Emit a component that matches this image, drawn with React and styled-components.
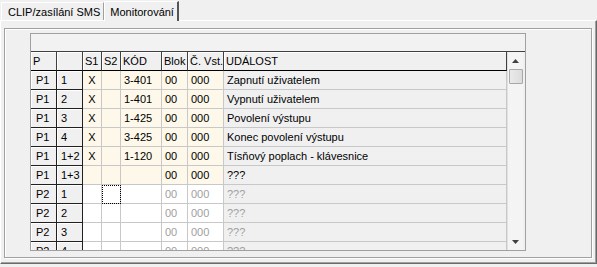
import styled, { createGlobalStyle } from "styled-components";

const GlobalStyle = createGlobalStyle`
  html, body {
    margin: 0;
    padding: 0;
    background: #f0f0f0;
  }
  * {
    box-sizing: border-box;
  }
`;

const columns = "26px 26px 19px 19px 41px 26px 36px 283px";

const Page = styled.div`
  width: 597px;
  height: 267px;
  background: #f0f0f0;
  font-family: "Liberation Sans", Arial, sans-serif;
  font-size: 11px;
  color: #000;
  overflow: hidden;
`;

const TabStrip = styled.div`
  display: flex;
  align-items: flex-end;
  height: 20px;
  padding-left: 1px;
`;

const Tab = styled.div`
  height: ${(p) => (p.$active ? "20px" : "18px")};
  display: flex;
  align-items: center;
  padding: 0 3px 0 ${(p) => (p.$active ? "5px" : "6px")};
  border-top: 1px solid #fff;
  border-left: 1px solid #fff;
  border-right: ${(p) => (p.$active ? "2px solid #555" : "1px solid #a0a0a0")};
  margin-bottom: ${(p) => (p.$active ? "-1px" : "0")};
  background: #f0f0f0;
  position: relative;
  z-index: ${(p) => (p.$active ? 1 : 0)};
  white-space: nowrap;
`;

const TabPanel = styled.div`
  width: 597px;
  height: 244px;
  border-top: 1px solid #fff;
  border-left: 1px solid #fff;
  border-right: 1px solid #696969;
  border-bottom: 1px solid #696969;
  box-shadow: inset -1px -1px 0 #a0a0a0;
  padding: 7px 4px 4px 3px;
`;

const GroupBox = styled.div`
  width: 588px;
  height: 230px;
  border: 1px solid #a0a0a0;
  box-shadow: inset 1px 1px 0 #fff, 1px 1px 0 #fff;
  padding: 4px 0 0 25px;
`;

const Grid = styled.div`
  width: 496px;
  height: 218px;
  border: 1px solid #a0a0a0;
  background: #f0f0f0;
  display: flex;
  flex-direction: column;
`;

const TitleStrip = styled.div`
  height: 18px;
  flex: none;
  background: #f2f2f2;
  border-bottom: 1px solid #404040;
`;

const GridBody = styled.div`
  flex: 1;
  display: flex;
  overflow: hidden;
`;

const Rows = styled.div`
  display: flex;
  flex-direction: column;
`;

const Row = styled.div`
  display: grid;
  grid-template-columns: ${columns};
  height: 19px;
  flex: none;
`;

const Cell = styled.div`
  height: 19px;
  display: flex;
  align-items: center;
  justify-content: ${(p) => (p.$center ? "center" : "flex-start")};
  padding-left: ${(p) => (p.$center ? "0" : "3px")};
  border-right: 1px solid #c8c8c8;
  border-bottom: 1px solid #c8c8c8;
  background: ${(p) => p.$bg || "#fff"};
  color: ${(p) => (p.$muted ? "#a0a0a0" : "#000")};
  white-space: nowrap;
  overflow: hidden;
  outline: ${(p) => (p.$focus ? "1px dotted #000" : "none")};
  outline-offset: -1px;
`;

const FixedCell = styled.div`
  height: 19px;
  display: flex;
  align-items: center;
  padding-left: ${(p) => (p.$wide ? "5px" : "4px")};
  background: #f0f0f0;
  border-right: 1px solid #202020;
  border-bottom: 1px solid #202020;
  box-shadow: inset 1px 1px 0 #fff;
  white-space: nowrap;
`;

const HeadCell = styled(FixedCell)`
  padding-left: 2px;
  border-bottom: 1px solid #000;
  border-right: 1px solid #404040;
`;

const ScrollBar = styled.div`
  width: 16px;
  flex: none;
  background: #f4f4f4;
  border-left: 1px solid #e0e0e0;
  display: flex;
  flex-direction: column;
  align-items: center;
`;

const Arrow = styled.div`
  width: 16px;
  height: 17px;
  flex: none;
  display: flex;
  align-items: center;
  justify-content: center;
`;

const Thumb = styled.div`
  width: 14px;
  height: 15px;
  flex: none;
  border: 1px solid #a8a8a8;
  border-radius: 1px;
  background: linear-gradient(90deg, #eaeaea, #dcdcdc);
`;

const Track = styled.div`
  flex: 1;
`;

const cream = "#fdf8ea";
const grey = "#f0f0f0";

const rows = [
  ["P1", "1", "X", "", "3-401", "00", "000", "Zapnutí uživatelem"],
  ["P1", "2", "X", "", "1-401", "00", "000", "Vypnutí uživatelem"],
  ["P1", "3", "X", "", "1-425", "00", "000", "Povolení výstupu"],
  ["P1", "4", "X", "", "3-425", "00", "000", "Konec povolení výstupu"],
  ["P1", "1+2", "X", "", "1-120", "00", "000", "Tísňový poplach - klávesnice"],
  ["P1", "1+3", "", "", "", "00", "000", "???"],
  ["P2", "1", "", "", "", "00", "000", "???"],
  ["P2", "2", "", "", "", "00", "000", "???"],
  ["P2", "3", "", "", "", "00", "000", "???"],
  ["P2", "4", "", "", "", "00", "000", "???"],
];

const headers = ["P", "", "S1", "S2", "KÓD", "Blok", "Č. Vst.", "UDÁLOST"];

function Triangle({ up }) {
  return (
    <svg width="7" height="4" viewBox="0 0 7 4">
      <polygon
        points={up ? "3.5,0 7,4 0,4" : "0,0 7,0 3.5,4"}
        fill="#404040"
      />
    </svg>
  );
}

export default function App() {
  return (
    <Page>
      <GlobalStyle />
      <TabStrip>
        <Tab>CLIP/zasílání SMS</Tab>
        <Tab $active>Monitorování</Tab>
      </TabStrip>
      <TabPanel>
        <GroupBox>
          <Grid>
            <TitleStrip />
            <GridBody>
              <Rows>
                <Row>
                  {headers.map((h, i) => (
                    <HeadCell key={i}>{h}</HeadCell>
                  ))}
                </Row>
                {rows.map((r, i) => {
                  const active = r[0] === "P1";
                  const bg = active ? cream : "#fff";
                  return (
                    <Row key={i}>
                      <FixedCell $wide>{r[0]}</FixedCell>
                      <FixedCell>{r[1]}</FixedCell>
                      <Cell $bg={bg} $center>
                        {r[2]}
                      </Cell>
                      <Cell $bg={bg} $focus={i === 6}>
                        {r[3]}
                      </Cell>
                      <Cell $bg={bg}>{r[4]}</Cell>
                      <Cell $bg={bg} $muted={!active}>
                        {r[5]}
                      </Cell>
                      <Cell $bg={bg} $muted={!active}>
                        {r[6]}
                      </Cell>
                      <Cell $bg={grey} $muted={!active}>
                        {r[7]}
                      </Cell>
                    </Row>
                  );
                })}
              </Rows>
              <ScrollBar>
                <Arrow>
                  <Triangle up />
                </Arrow>
                <Thumb />
                <Track />
                <Arrow>
                  <Triangle />
                </Arrow>
              </ScrollBar>
            </GridBody>
          </Grid>
        </GroupBox>
      </TabPanel>
    </Page>
  );
}
